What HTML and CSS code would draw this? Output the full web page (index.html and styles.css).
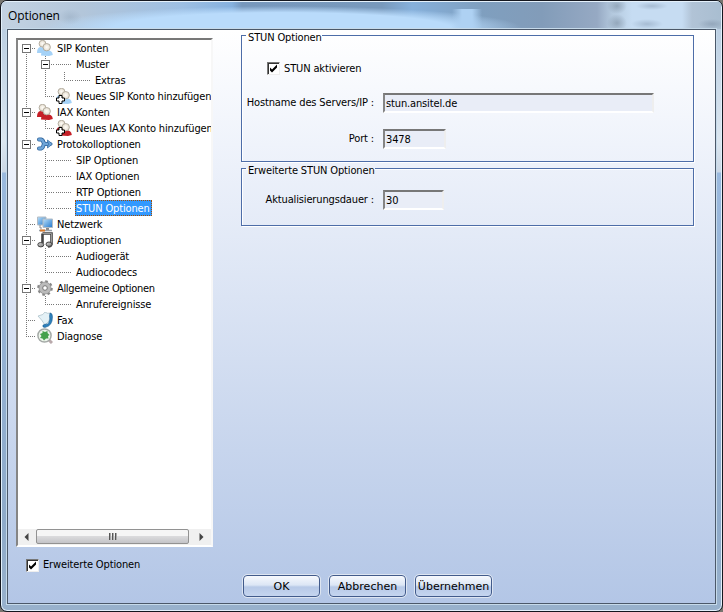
FILE: index.html
```html
<!DOCTYPE html>
<html lang="de">
<head>
<meta charset="utf-8">
<title>Optionen</title>
<link rel="stylesheet" href="styles.css">
</head>
<body>
<svg class="defs" aria-hidden="true">
  <defs>
    <linearGradient id="silver" x1="0" y1="0" x2="1" y2="1"><stop offset="0" stop-color="#ddd"/><stop offset="1" stop-color="#777"/></linearGradient>
    <linearGradient id="screen" x1="0" y1="0" x2="1" y2="1"><stop offset="0" stop-color="#b9e0fa"/><stop offset="1" stop-color="#2478cc"/></linearGradient>
    <radialGradient id="head"><stop offset="0" stop-color="#fffdf8"/><stop offset="1" stop-color="#e5ddcf"/></radialGradient>
    <symbol id="people" viewBox="0 0 16 16">
      <path d="M0 13Q0 8 3 7L8 8V13Z" fill="currentColor"/>
      <circle cx="5.500" cy="3.700" r="3.400" fill="url(#head)" stroke="#a69f92" stroke-width=".8"/>
      <path d="M4 15.500Q4 10 9 10Q15.500 10 15.800 15L12 16Z" fill="currentColor"/>
      <circle cx="9.700" cy="7.200" r="3.700" fill="url(#head)" stroke="#a69f92" stroke-width=".8"/>
    </symbol>
    <symbol id="plus" viewBox="0 0 9 9"><path d="M3 .5H6V3H8.500V6H6V8.500H3V6H.5V3H3Z" fill="#fff" stroke="#000" stroke-width="1"/></symbol>
  </defs>
</svg>
<div class="window">
  <header class="titlebar"><span>Optionen</span></header>
  <main class="client">
    <aside class="side">
      <div class="tree">
        <div class="rows">
          <div class="row"><i class="c start h box"></i><i class="ic"><svg class="blue"><use href="#people"/></svg></i><span>SIP Konten</span></div>
          <div class="row"><i class="c v"></i><i class="c v h box"></i><i class="ic h"></i><span>Muster</span></div>
          <div class="row"><i class="c v"></i><i class="c v"></i><i class="c end h"></i><i class="ic h"></i><span>Extras</span></div>
          <div class="row"><i class="c v"></i><i class="c end h"></i><i class="ic add"><svg class="blue"><use href="#people"/></svg><svg class="plus"><use href="#plus"/></svg></i><span>Neues SIP Konto hinzufügen</span></div>
          <div class="row"><i class="c v h box"></i><i class="ic"><svg class="red"><use href="#people"/></svg></i><span>IAX Konten</span></div>
          <div class="row"><i class="c v"></i><i class="c end h"></i><i class="ic add"><svg class="red"><use href="#people"/></svg><svg class="plus"><use href="#plus"/></svg></i><span>Neues IAX Konto hinzufügen</span></div>
          <div class="row"><i class="c v h box"></i><i class="ic"><svg viewBox="0 0 16 16"><path d="M2 3.500H4Q6 4 6.500 6.500Q7 8 9 8H13M2 12.500H4Q6 12 6.500 9" fill="none" stroke="#31659c" stroke-width="4" stroke-linecap="round"/><path d="M2 3.500H4Q6 4 6.500 6.500Q7 8 9 8H13M2 12.500H4Q6 12 6.500 9" fill="none" stroke="#6fa5d8" stroke-width="2.400" stroke-linecap="round"/><path d="M10.500 4L15.500 8L10.500 12V10L12 8L10.500 6Z" fill="#6fa5d8" stroke="#31659c" stroke-width=".7"/></svg></i><span>Protokolloptionen</span></div>
          <div class="row"><i class="c v"></i><i class="c v h"></i><i class="ic h"></i><span>SIP Optionen</span></div>
          <div class="row"><i class="c v"></i><i class="c v h"></i><i class="ic h"></i><span>IAX Optionen</span></div>
          <div class="row"><i class="c v"></i><i class="c v h"></i><i class="ic h"></i><span>RTP Optionen</span></div>
          <div class="row"><i class="c v"></i><i class="c end h"></i><i class="ic h"></i><span class="selected">STUN Optionen</span></div>
          <div class="row"><i class="c v h"></i><i class="ic"><svg viewBox="0 0 16 16"><path d="M.5 1H9V9H.5Z" fill="url(#screen)" stroke="#b3bcc5"/><path d="M6 3H15.500V11.500H6Z" fill="url(#screen)" stroke="#b3bcc5"/><path d="M9 12H12V14H9Z" fill="#888"/><path d="M2 14.500H15" stroke="#9aa1a8" stroke-width="1.500"/><path d="M3 14.500H8" stroke="#d9792b" stroke-width="2"/><path d="M3 9V12H5" stroke="#888" fill="none"/></svg></i><span>Netzwerk</span></div>
          <div class="row"><i class="c v h box"></i><i class="ic"><svg viewBox="0 0 16 16"><path d="M5.500 1.500H14.500V11.500Q14.500 14.500 11 14.500M5.500 1.500V11" fill="none" stroke="#444" stroke-width="2.600"/><path d="M5.500 1.500H14.500V12" fill="none" stroke="#999" stroke-width="1"/><ellipse cx="3.800" cy="12.700" rx="3" ry="2.200" fill="url(#silver)" stroke="#444"/><ellipse cx="12" cy="12.200" rx="3" ry="2.200" fill="url(#silver)" stroke="#444"/></svg></i><span>Audioptionen</span></div>
          <div class="row"><i class="c v"></i><i class="c v h"></i><i class="ic h"></i><span>Audiogerät</span></div>
          <div class="row"><i class="c v"></i><i class="c end h"></i><i class="ic h"></i><span>Audiocodecs</span></div>
          <div class="row"><i class="c v h box"></i><i class="ic"><svg viewBox="0 0 16 16"><circle cx="8" cy="8" r="6.600" fill="none" stroke="#888" stroke-width="2.400" stroke-dasharray="2.600 2.584"/><circle cx="8" cy="8" r="6" fill="#bbb" stroke="#888" stroke-width=".7"/><circle cx="8" cy="8" r="2.300" fill="#fff" stroke="#777"/></svg></i><span class="tight">Allgemeine Optionen</span></div>
          <div class="row"><i class="c v"></i><i class="c end h"></i><i class="ic h"></i><span>Anrufereignisse</span></div>
          <div class="row"><i class="c v h"></i><i class="ic"><svg viewBox="0 0 16 16"><path d="M1 4Q7 3 8 0Q10 2 14 1L12 9L8 13Q5 8 1 4Z" fill="#e4f1f6" stroke="#a3bac4" stroke-width=".7"/><path d="M13 1Q15.500 1 15.500 5Q15.500 14 8 15.500Q5 15.500 6 13L9 12Q11 13 12 10Q13.500 7 12.500 4Z" fill="#2e80bb" stroke="#17588d" stroke-width=".5"/></svg></i><span>Fax</span></div>
          <div class="row"><i class="c end h"></i><i class="ic"><svg viewBox="0 0 16 16"><path d="M11 11L15 15" stroke="#b9a9ac" stroke-width="3"/><circle cx="7.500" cy="7.500" r="6.600" fill="#eef5ec" stroke="#a5aaa7" stroke-width="1.500"/><path d="M3 6L5.500 5L5.500 3L8 4L10.500 3L10.500 5L12.500 7L11 8L11.500 10.500L9 10.500L7 12.500L5.500 10.500L3 10L4.500 8Z" fill="#45a14b"/></svg></i><span>Diagnose</span></div>
        </div>
        <div class="scroll">
          <svg class="arrow" viewBox="0 0 17 16"><path d="M10 4V12L6 8Z"/></svg>
          <div class="thumb"><b></b><b></b><b></b></div>
          <svg class="arrow right" viewBox="0 0 17 16"><path d="M6 4V12L10 8Z"/></svg>
        </div>
      </div>
      <label class="check extended"><svg viewBox="0 0 11 11"><path d="M2 4.500V7.500L4 9.500L9 4.500V1.500L4 6.500Z"/></svg><span>Erweiterte Optionen</span></label>
    </aside>
    <section class="content">
      <fieldset class="stun">
        <legend>STUN Optionen</legend>
        <label class="check enable"><svg viewBox="0 0 11 11"><path d="M2 4.500V7.500L4 9.500L9 4.500V1.500L4 6.500Z"/></svg><span>STUN aktivieren</span></label>
        <div class="field host"><label>Hostname des Servers/IP :</label><div class="input wide">stun.ansitel.de</div></div>
        <div class="field port"><label>Port :</label><div class="input mid">3478</div></div>
      </fieldset>
      <fieldset class="advanced">
        <legend>Erweiterte STUN Optionen</legend>
        <div class="field refresh"><label>Aktualisierungsdauer :</label><div class="input small">30</div></div>
      </fieldset>
      <footer><button>OK</button><button>Abbrechen</button><button>Übernehmen</button></footer>
    </section>
  </main>
</div>
</body>
</html>
```
FILE: styles.css
```css
*, *::before, *::after { box-sizing: border-box; }
body { margin: 0; background: #77756f; font: 11px/16px "DejaVu Sans Condensed", "DejaVu Sans", sans-serif; font-stretch: condensed; letter-spacing: -.14px; color: #000; }
.defs { position: absolute; width: 0; height: 0; }
.window {
  width: 723px; height: 612px; overflow: hidden;
  display: flex; flex-direction: column;
  border: 1px solid #14171f; border-radius: 7px;
  box-shadow: inset 0 0 0 1px #e2f0fb;
  padding: 0 6px 7px;
  background: linear-gradient(#aac0d4, #bccfe2 28px, #dbe6f0 140px, #cbd7e5 171px, #9ab9de 172px, #8eaac9 520px, #98b1cc);
}
.titlebar {
  flex: 0 0 28px; margin: 0 -5px; padding: 5px 0 0 6px;
  border-top: 1px solid #e5f1fb;
  font: 12px/18px "Open Sans", "Noto Sans", sans-serif; letter-spacing: -.1px;
  background:
    radial-gradient(ellipse 12px 8px at 68px 15px, #8fa5bb66, transparent),
    radial-gradient(ellipse 10px 9px at 615px 21px, #75879a88, transparent),
    radial-gradient(ellipse 10px 8px at 615px 4px, #75879a88, transparent),
    radial-gradient(ellipse 16px 5px at 645px 22px, #8ba0b888, transparent),
    radial-gradient(ellipse 16px 4px at 650px 4px, #8ba0b888, transparent),
    radial-gradient(ellipse 14px 5px at 710px 22px, #7f92a888, transparent),
    linear-gradient(90deg, transparent 450px, #aed1f3 460px 470px, transparent 480px) 0 100% / 100% 20px no-repeat,
    radial-gradient(ellipse 240px 22px at 280px 26px, #b9dbfb 70%, transparent),
    linear-gradient(90deg, #c3d2e2 0, #b3c6da 80px, #9dbfe3 180px, #86b1de 230px, #7798bd 240px, #7899bc 380px, #86b0db 410px, #7f9fbf 480px, #829cb9 540px, #96a9c3 595px, #b3c8dd 610px, #c6dcf2 630px, #c6dcf2 680px, #b1c3d6 690px, #a8bdd0 723px);
}
.client {
  flex: 1; display: flex; width: 709px;
  border: 1px solid #4b5869; outline: 1px solid #c6daea;
  background: linear-gradient(#fff, #eff3fb 20%, #b3c6e6);
}
.side { width: 205px; padding: 8px 0 0 8px; }
.tree {
  width: 197px; height: 509px; display: flex; flex-direction: column;
  border: 2px solid; border-color: #777 #f7f7f7 #fff #858585;
  background: #fff; overflow: hidden;
}
.rows { flex: 1; margin-left: -1px; overflow: hidden; }
.row { display: flex; height: 16px; white-space: nowrap; }
.row span { padding: 0 2px; line-height: 17px; }
.row .tight { letter-spacing: -.34px; }
.c { width: 19px; height: 16px; flex: none; position: relative; }
.v::before, .start::before, .end::before {
  content: ""; position: absolute; left: 9px; top: 0; width: 1px; height: 16px;
  background: repeating-linear-gradient(#777 0 1px, #fff0 1px 2px);
}
.start::before { top: 8px; height: 8px; }
.end::before { height: 8px; }
.c.h { background: repeating-linear-gradient(90deg, #777 0 1px, #fff0 1px 2px) 9px 8px / 10px 1px no-repeat; }
.ic { width: 19px; height: 16px; flex: none; position: relative; }
.ic.h { background: repeating-linear-gradient(90deg, #fff0 0 1px, #777 1px 2px) 0 8px / 17px 1px no-repeat; }
.box::after {
  content: ""; position: absolute; left: 5px; top: 4px; width: 9px; height: 9px;
  border: 1px solid #777; background: linear-gradient(#000, #000) center / 5px 1px no-repeat #fff;
}
.ic svg { display: block; width: 16px; height: 16px; margin-left: 1px; }
.ic .plus { position: absolute; left: 0; top: 7px; width: 9px; height: 9px; }
.blue { color: #a5d2f7; }
.red { color: #c51f27; }
.row .selected { background: #3399ff; color: #fff; outline: 1px dotted #a34d00; outline-offset: -1px; margin-left: 1px; padding: 0 2px 0 1px; }
.scroll { display: flex; height: 16px; background: #f0f0f0; }
.arrow { width: 18px; height: 16px; flex: none; fill: #444; }
.right { margin-left: 4px; }
.thumb {
  width: 153px; height: 15px; display: flex; justify-content: center; align-items: center; gap: 1px;
  border: 1px solid #929292; border-radius: 2px;
  background: linear-gradient(#f5f5f5 0 45%, #dadadc 50%, #c4c4c8);
}
.thumb b { width: 2px; height: 7px; background: linear-gradient(90deg, #555 50%, #aaa 50%); }
.check { display: flex; align-items: center; gap: 4px; white-space: nowrap; }
.check svg { width: 13px; height: 13px; background: #fff; border: 1px solid; border-color: #777 #eee #eee #777; box-shadow: inset 1px 1px #333; }
.extended { margin: 10px 0 0 10px; }
.content { flex: 1; padding: 5px 0 0 28px; }
fieldset {
  width: 453px; margin: 0; padding: 0; min-width: 0;
  border: 1px solid #4d6da8; box-shadow: 1px 1px #fff, inset 1px 1px #fff;
}
legend { padding: 0 0 0 2px; margin-left: 4px; height: 1px; line-height: 5px; }
.stun { height: 127px; }
.advanced { height: 58px; margin-top: 6px; }
.enable { margin: 24px 0 0 25px; }
.enable span { line-height: 18px; margin-bottom: -2px; }
.field { display: flex; align-items: center; }
.field label { width: 132px; text-align: right; margin-right: 9px; white-space: nowrap; line-height: 18px; }
.input {
  height: 20px; padding-left: 1px; border: 2px solid; line-height: 17px;
  border-color: #777 #eee #fff #858585; background: #e9edf7;
}
.wide { width: 271px; }
.mid { width: 63px; }
.small { width: 61px; }
.host { margin-top: 17px; }
.port { margin-top: 16px; }
.refresh { margin-top: 21px; }
footer { display: flex; gap: 9px; margin: 349px 0 0 2px; }
button {
  width: 77px; height: 22px; padding: 0; white-space: nowrap; letter-spacing: 0;
  display: flex; justify-content: center; align-items: center;
  font: 11px "DejaVu Sans", sans-serif; color: #000;
  border: 1px solid #425b8b; border-radius: 4px; outline: 1px solid #dde5f1;
  background: linear-gradient(#f7f9fd, #dce6f5 45%, #b7c9e7 55%, #c5d5ef);
}
```
